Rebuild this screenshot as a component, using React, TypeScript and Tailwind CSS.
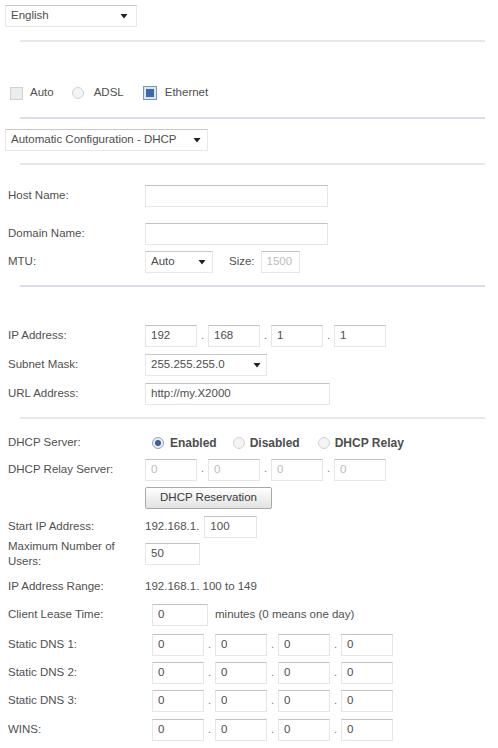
import React from "react";

const Arrow = () => (
  <svg width="8" height="5" viewBox="0 0 8 5" className="shrink-0">
    <path d="M0.5 0 L7.5 0 L4 4.5 Z" fill="#222" />
  </svg>
);

const Select = ({ w, text, arrowPad = "pr-[6px]" }: { w: string; text: string; arrowPad?: string }) => (
  <div
    className={`${w} h-[22px] flex items-center justify-between pl-[5px] ${arrowPad} bg-white border border-[#e8e8e8] border-t-[#c8c8c8] text-[11.5px] text-[#4d4d4d]`}
  >
    <span>{text}</span>
    <Arrow />
  </div>
);

const Box = ({
  w,
  value = "",
  muted = false,
}: {
  w: string;
  value?: string;
  muted?: boolean;
}) => (
  <div
    className={`${w} h-[22px] flex items-center pl-[5px] bg-white border border-[#e6e6e6] border-t-[#c2c2c2] text-[11.5px] ${
      muted ? "text-[#bcbcbc]" : "text-[#4d4d4d]"
    }`}
  >
    {value}
  </div>
);

const Quad = ({ values, muted = false }: { values: string[]; muted?: boolean }) => (
  <div className="flex items-center">
    {values.map((v, i) => (
      <React.Fragment key={i}>
        {i > 0 && (
          <span className="w-[11px] flex justify-center items-end h-[22px] pb-[4px] text-[11px] text-[#777]">
            .
          </span>
        )}
        <Box w="w-[52px]" value={v} muted={muted} />
      </React.Fragment>
    ))}
  </div>
);

const Line = ({ tone = "gray", mt }: { tone?: "gray" | "blue"; mt: string }) => (
  <div
    className={`${mt} ml-[20px] w-[465px] h-[2px] ${
      tone === "blue" ? "bg-[#dcdcf0]" : "bg-[#e8e8e8]"
    }`}
  />
);

const Row = ({
  mt,
  label,
  children,
  h = "h-[22px]",
}: {
  mt: string;
  label: React.ReactNode;
  children?: React.ReactNode;
  h?: string;
}) => (
  <div className={`${mt} ${h} flex items-center`}>
    <div className="w-[145px] pl-[8px] shrink-0 text-[11.5px] text-[#505050]">{label}</div>
    <div className="flex items-center">{children}</div>
  </div>
);

const Radio = ({ checked = false }: { checked?: boolean }) => (
  <span
    className={`w-[12px] h-[12px] rounded-full border shrink-0 flex items-center justify-center ${
      checked ? "border-[#8ea3bf] bg-[#e8eef6]" : "border-[#d2d2d2] bg-[#f4f4f4]"
    }`}
  >
    {checked && <span className="w-[6px] h-[6px] rounded-full bg-[#3d5f8f]" />}
  </span>
);

export default function App() {
  return (
    <div
      className="w-[498px] h-[748px] bg-white overflow-hidden"
      style={{ fontFamily: '"Liberation Sans", Arial, sans-serif' }}
    >
      <div className="pt-[5px] pl-[5px]">
        <Select w="w-[132px]" text="English" arrowPad="pr-[8px]" />
      </div>
      <Line mt="mt-[13px]" />

      <div className="mt-[43px] h-[16px] flex items-center pl-[10px] text-[11.5px] text-[#505050]">
        <span className="w-[13px] h-[13px] shrink-0 border border-[#d2d2d2] bg-[#ededed]" />
        <span className="ml-[7px]">Auto</span>
        <span className="ml-[18px]">
          <Radio />
        </span>
        <span className="ml-[10px]">ADSL</span>
        <span className="ml-[19px] w-[14px] h-[14px] shrink-0 border border-[#7b95bd] bg-[#dbe5f3] flex items-center justify-center">
          <span className="w-[8px] h-[8px] bg-[#3c6aa8]" />
        </span>
        <span className="ml-[8px]">Ethernet</span>
      </div>
      <Line tone="blue" mt="mt-[16px]" />

      <div className="mt-[10px] pl-[5px]">
        <Select w="w-[203px]" text="Automatic Configuration - DHCP" />
      </div>
      <Line mt="mt-[12px]" />

      <Row mt="mt-[20px]" label="Host Name:">
        <Box w="w-[183px]" />
      </Row>
      <Row mt="mt-[16px]" label="Domain Name:">
        <Box w="w-[183px]" />
      </Row>
      <Row mt="mt-[6px]" label="MTU:">
        <Select w="w-[68px]" text="Auto" />
        <span className="ml-[16px] text-[11.5px] text-[#505050]">Size:</span>
        <span className="ml-[6px]">
          <Box w="w-[39px]" value="1500" muted />
        </span>
      </Row>
      <Line tone="blue" mt="mt-[12px]" />

      <Row mt="mt-[38px]" label="IP Address:">
        <Quad values={["192", "168", "1", "1"]} />
      </Row>
      <Row mt="mt-[7px]" label="Subnet Mask:">
        <Select w="w-[122px]" text="255.255.255.0" arrowPad="pr-[5px]" />
      </Row>
      <Row mt="mt-[7px]" label="URL Address:">
        <Box w="w-[185px]" value="http://my.X2000" />
      </Row>
      <Line mt="mt-[12px]" />

      <Row mt="mt-[16px]" h="h-[16px]" label="DHCP Server:">
        <div className="flex items-center pl-[7px] text-[12px] font-bold text-[#4d4d4d]">
          <Radio checked />
          <span className="ml-[6px]">Enabled</span>
          <span className="ml-[16px]">
            <Radio />
          </span>
          <span className="ml-[5px]">Disabled</span>
          <span className="ml-[18px]">
            <Radio />
          </span>
          <span className="ml-[5px]">DHCP Relay</span>
        </div>
      </Row>
      <Row mt="mt-[7px]" h="h-[23px]" label="DHCP Relay Server:">
        <Quad values={["0", "0", "0", "0"]} muted />
      </Row>
      <Row mt="mt-[6px]" label="">
        <div className="w-[127px] h-[22px] flex items-center justify-center rounded-[2px] border border-[#a8a8a8] bg-gradient-to-b from-white to-[#e2e2e2] text-[11.5px] text-[#3a3a3a]">
          DHCP Reservation
        </div>
      </Row>
      <Row mt="mt-[6px]" h="h-[23px]" label="Start IP Address:">
        <span className="text-[11.5px] text-[#505050]">192.168.1.</span>
        <span className="ml-[5px]">
          <Box w="w-[53px]" value="100" />
        </span>
      </Row>
      <Row
        mt="mt-[1px]"
        h="h-[30px]"
        label={
          <span className="block leading-[15px]">
            Maximum Number of
            <br />
            Users:
          </span>
        }
      >
        <Box w="w-[55px]" value="50" />
      </Row>
      <Row mt="mt-[11px]" h="h-[14px]" label="IP Address Range:">
        <span className="text-[11.5px] text-[#505050]">192.168.1. 100 to 149</span>
      </Row>
      <Row mt="mt-[10px]" label="Client Lease Time:">
        <div className="flex items-center pl-[7px]">
          <Box w="w-[56px]" value="0" />
          <span className="ml-[7px] text-[11.5px] text-[#505050]">minutes (0 means one day)</span>
        </div>
      </Row>
      <Row mt="mt-[8px]" label="Static DNS 1:">
        <div className="pl-[7px]">
          <Quad values={["0", "0", "0", "0"]} />
        </div>
      </Row>
      <Row mt="mt-[6px]" label="Static DNS 2:">
        <div className="pl-[7px]">
          <Quad values={["0", "0", "0", "0"]} />
        </div>
      </Row>
      <Row mt="mt-[6px]" label="Static DNS 3:">
        <div className="pl-[7px]">
          <Quad values={["0", "0", "0", "0"]} />
        </div>
      </Row>
      <Row mt="mt-[7px]" label="WINS:">
        <div className="pl-[7px]">
          <Quad values={["0", "0", "0", "0"]} />
        </div>
      </Row>
    </div>
  );
}
